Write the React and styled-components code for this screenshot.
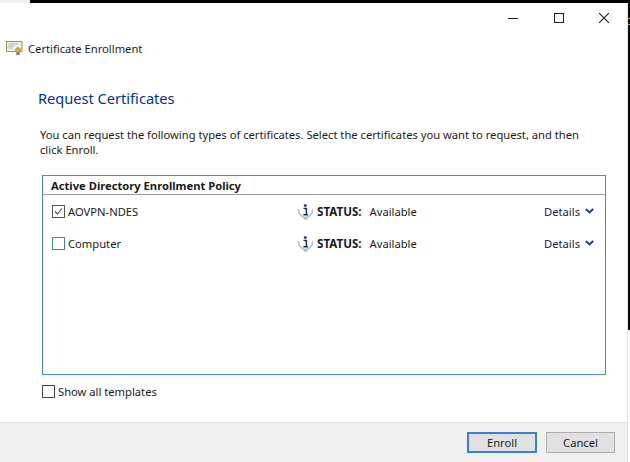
import React from "react";
import styled, { createGlobalStyle } from "styled-components";

const Global = createGlobalStyle`
  html, body { margin: 0; padding: 0; background: #fff; }
  body { font-family: "Noto Sans", "Open Sans", sans-serif; color: #1a1a1a; }
`;

const Page = styled.div`
  width: 630px; height: 462px; overflow: hidden; display: flex; flex-direction: column; background: #fff;
`;
const TopStrip = styled.div`
  height: 3px; flex: none; display: flex;
`;
const StripLight = styled.div`width: 30px; background: #f2f2f2;`;
const StripDark = styled.div`flex: 1; background: #000;`;
const Body = styled.div`flex: 1; display: flex; min-height: 0;`;
const Window = styled.div`flex: 1; display: flex; flex-direction: column; min-width: 0;`;
const WindowEdge = styled.div`width: 1px; flex: none; background: #e2e2e2;`;
const DesktopSliver = styled.div`width: 2px; flex: none; display: flex; flex-direction: column;`;
const BlackBar = styled.div`height: 327px; flex: none; background: #0c0c0c; position: relative;`;
const BarTick = styled.span`
  position: absolute; left: 0; right: 0; top: ${p => p.$top}px; height: 1px; background: #c9b48a;
`;
const Caption = styled.div`
  height: 30px; flex: none; display: flex; justify-content: flex-end; align-items: center; padding-right: 18px; gap: 35.5px;
`;
const CaptionIcon = styled.svg`width: 10px; height: 10px; display: block; fill: none; stroke: #222; stroke-width: 1.1;`;
const TitleRow = styled.div`
  height: 30px; flex: none; display: flex; align-items: center; gap: 5px; padding-left: 6px; font-size: 11.2px;
`;
const Content = styled.div`flex: 1; padding: 0 21px 0 42px; min-height: 0; display: flex; flex-direction: column;`;
const Heading = styled.h1`
  margin: 25px 0 0 -4px; font-size: 14.6px; line-height: 20px; font-weight: 400; color: #003399;
`;
const Intro = styled.p`
  margin: 19px 0 0 -2px; width: 560px; font-size: 11.2px; line-height: 15px;
`;
const Policy = styled.section`
  margin-top: 18px; height: 200px; box-sizing: border-box; border: 1px solid #4a8ae0; flex: none;
`;
const PolicyHead = styled.div`
  height: 17px; padding: 1px 0 0 8px; border-bottom: 1px solid #a0a0a0; font-size: 11.2px; line-height: 18px; font-weight: 700;
`;
const Row = styled.div`
  height: 32px; display: grid; grid-template-columns: 245px 1fr auto; align-items: center; padding: 0 11px 0 9px; font-size: 11.2px;
`;
const CheckLabel = styled.label`display: flex; align-items: center; gap: 3px;`;
const Box = styled.span`
  width: 11px; height: 11px; flex: none; display: block; position: relative;
  border: 1px solid ${p => p.$color};
  background: #fff;
`;
const Tick = styled.svg`
  position: absolute; inset: 0; width: 11px; height: 11px; fill: none; stroke: #444; stroke-width: 1.1;
`;
const Status = styled.div`display: flex; align-items: center;`;
const InfoIcon = styled.svg`width: 17px; height: 17px; flex: none; margin-right: 3px;`;
const StatusKey = styled.strong`font-weight: 700; font-size: 11.6px; margin-right: 8px;`;
const Details = styled.div`display: flex; align-items: center; gap: 5px; color: #1f1a3a;`;
const Chevron = styled.svg`width: 9px; height: 6px; fill: none; stroke: #1f3f8f; stroke-width: 2;`;
const ShowAll = styled.label`
  margin: 9px 0 0 0; display: flex; align-items: center; gap: 3px; font-size: 11.2px; line-height: 15px;
`;
const Footer = styled.footer`
  height: 40px; flex: none; box-sizing: border-box; padding-right: 12px; background: #f0f0f0; border-top: 1px solid #dfdfdf;
  display: flex; justify-content: flex-end; align-items: center; gap: 9px;
`;
const Button = styled.button`
  width: ${p => p.$w}px; height: 21px; box-sizing: border-box; padding: 0; font: 11.2px "Noto Sans", sans-serif; color: #1a1a1a;
  background: #e1e1e1; border: ${p => (p.$primary ? "2px solid #3c7fd9" : "1px solid #adadad")};
`;

const Info = () => (
  <InfoIcon viewBox="0 0 17 17">
    <path d="M1.5 6 C1.5 11 4.5 14 8.5 14.5 C12.5 14 15.5 11 15.5 6" fill="none" stroke="#a9bbd0" strokeWidth="1.3" />
    <path d="M6.5 15.8 H10.5" stroke="#8aa0b8" strokeWidth="1" />
    <circle cx="8.3" cy="2.6" r="1.4" fill="#1d2f6f" />
    <path d="M6.5 5.6 H9.4 V11.2 M6.3 11.8 H11" fill="none" stroke="#1d2f6f" strokeWidth="1.5" />
  </InfoIcon>
);

const ChevronDown = () => (
  <Chevron viewBox="0 0 9 6"><path d="M0.8 1 L4.5 4.4 L8.2 1" /></Chevron>
);

const CertIcon = () => (
  <svg width="17" height="15" viewBox="0 0 17 15" style={{ display: "block" }}>
    <rect x="0.5" y="0.5" width="15.5" height="10" fill="#f4f1e6" stroke="#a8875a" />
    <path d="M2.5 3 H12 M2.5 5 H8 M2.5 7 H7" stroke="#8fa8c8" strokeWidth="0.8" />
    <path d="M10.5 10.5 V14.5 L12 13.5 L13.5 14.5 V10.5" fill="#3a6fc0" />
    <circle cx="12" cy="9" r="2.6" fill="#e0a82e" stroke="#b07e1c" strokeWidth="0.5" />
  </svg>
);

const rows = [
  { name: "AOVPN-NDES", checked: true },
  { name: "Computer", checked: false },
];

export default function App() {
  return (
    <Page>
      <Global />
      <TopStrip><StripLight /><StripDark /></TopStrip>
      <Body>
        <Window>
          <Caption>
            <CaptionIcon viewBox="0 0 10 10"><path d="M0 5.5 H10" /></CaptionIcon>
            <CaptionIcon viewBox="0 0 10 10"><rect x="0.5" y="0.5" width="9" height="9" /></CaptionIcon>
            <CaptionIcon viewBox="0 0 10 10"><path d="M0 0 L10 10 M10 0 L0 10" /></CaptionIcon>
          </Caption>
          <TitleRow><CertIcon />Certificate Enrollment</TitleRow>
          <Content>
            <Heading>Request Certificates</Heading>
            <Intro>You can request the following types of certificates. Select the certificates you want to request, and then click Enroll.</Intro>
            <Policy>
              <PolicyHead>Active Directory Enrollment Policy</PolicyHead>
              {rows.map(r => (
                <Row key={r.name}>
                  <CheckLabel>
                    <Box $color={r.checked ? "#555" : "#3f7fc8"}>
                      {r.checked && <Tick viewBox="0 0 11 11"><path d="M2 5.5 L4.5 8 L9 2.5" /></Tick>}
                    </Box>
                    {r.name}
                  </CheckLabel>
                  <Status><Info /><StatusKey>STATUS:</StatusKey>Available</Status>
                  <Details>Details <ChevronDown /></Details>
                </Row>
              ))}
            </Policy>
            <ShowAll><Box $color="#444" />Show all templates</ShowAll>
          </Content>
          <Footer>
            <Button $primary $w={70}>Enroll</Button>
            <Button $w={69}>Cancel</Button>
          </Footer>
        </Window>
        <WindowEdge />
        <DesktopSliver>
          <BlackBar>
            <BarTick $top={15} />
            <BarTick $top={21} />
          </BlackBar>
        </DesktopSliver>
      </Body>
    </Page>
  );
}
